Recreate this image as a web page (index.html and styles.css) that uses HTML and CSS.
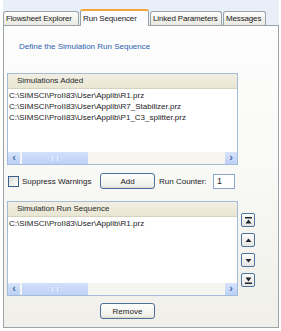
FILE: index.html
```html
<!DOCTYPE html>
<html lang="en">
<head>
  <meta charset="UTF-8">
  <title>Run Sequencer</title>
  <link rel="stylesheet" href="styles.css">
</head>
<body>
  <div class="window">
    <div class="tabstrip">
      <div class="tab">Flowsheet Explorer</div>
      <div class="tab active">Run Sequencer</div>
      <div class="tab">Linked Parameters</div>
      <div class="tab">Messages</div>
    </div>

    <div class="panel">
      <div class="title">Define the Simulation Run Sequence</div>

      <div class="listbox list-added">
        <div class="list-head">Simulations Added</div>
        <div class="list-body">
          <div class="item">C:\SIMSCI\ProII83\User\Applib\R1.prz</div>
          <div class="item">C:\SIMSCI\ProII83\User\Applib\R7_Stabilizer.prz</div>
          <div class="item">C:\SIMSCI\ProII83\User\Applib\P1_C3_splitter.prz</div>
        </div>
        <div class="hscroll">
          <span class="sb-btn">&lsaquo;</span>
          <span class="sb-thumb"><span class="grip"></span></span>
          <span class="sb-track"></span>
          <span class="sb-btn">&rsaquo;</span>
        </div>
      </div>

      <div class="controls">
        <label class="check"><span class="box"></span>Suppress Warnings</label>
        <button class="btn btn-add">Add</button>
        <span class="counter-label">Run Counter:</span>
        <span class="counter">1</span>
      </div>

      <div class="seq-row">
        <div class="listbox list-seq">
          <div class="list-head">Simulation Run Sequence</div>
          <div class="list-body">
            <div class="item">C:\SIMSCI\ProII83\User\Applib\R1.prz</div>
          </div>
          <div class="hscroll">
            <span class="sb-btn">&lsaquo;</span>
            <span class="sb-thumb"><span class="grip"></span></span>
            <span class="sb-track"></span>
            <span class="sb-btn">&rsaquo;</span>
          </div>
        </div>

        <div class="movers">
          <span class="mover">
            <svg width="7" height="7" viewBox="0 0 7 7"><rect x="0" y="0" width="7" height="1.5" fill="#1d2430"/><polygon points="0.5,6.5 3.5,2.5 6.5,6.5" fill="#1d2430"/></svg>
          </span>
          <span class="mover">
            <svg width="7" height="7" viewBox="0 0 7 7"><polygon points="0.5,5 3.5,1.5 6.5,5" fill="#1d2430"/></svg>
          </span>
          <span class="mover">
            <svg width="7" height="7" viewBox="0 0 7 7"><polygon points="0.5,2 3.5,5.5 6.5,2" fill="#1d2430"/></svg>
          </span>
          <span class="mover">
            <svg width="7" height="7" viewBox="0 0 7 7"><polygon points="0.5,0.5 3.5,4.5 6.5,0.5" fill="#1d2430"/><rect x="0" y="5.5" width="7" height="1.5" fill="#1d2430"/></svg>
          </span>
        </div>
      </div>

      <button class="btn btn-remove">Remove</button>
    </div>
  </div>
</body>
</html>
```

FILE: styles.css
```css
body {
  margin: 0;
  background-color: #fff;
  font-family: 'Liberation Sans', Arial, sans-serif;
  font-size: 8px;
  color: #1b1b1b;
}

.window {
  width: 276px;
  margin-left: 3px;
}

.tabstrip {
  display: flex;
  align-items: flex-end;
  height: 25px;
  background-color: #e9eff8;
}

.tab {
  height: 13px;
  line-height: 13px;
  padding: 0 2px;
  margin-right: 1px;
  border: 1px solid #9aa3a6;
  border-bottom: none;
  border-radius: 3px 3px 0 0;
  background: linear-gradient(#fdfdfb, #e9e8e1);
  white-space: nowrap;
  overflow: hidden;
  letter-spacing: -0.15px;
  color: #222;
}

.tab:first-child {
  width: 70px;
}

.tab.active {
  height: 15px;
  line-height: 16px;
  width: 63px;
  background: #fcfcfe;
  border-top: 2px solid #f2a43a;
  margin-bottom: -1px;
  position: relative;
}

.tab:nth-child(3) {
  width: 66px;
}

.tab:nth-child(4) {
  width: 37px;
}

.panel {
  height: 301px;
  border: 1px solid #9aa3a6;
  background: linear-gradient(#fdfdfd 0%, #f9f9f7 45%, #f0efe9 100%);
  padding: 0 0 0 3px;
  display: flex;
  flex-direction: column;
}

.title {
  margin-top: 16px;
  margin-left: 12px;
  line-height: 10px;
  color: #2a5fb0;
}

.listbox {
  width: 229px;
  border: 1px solid #a4bcd8;
  background-color: #fff;
  display: flex;
  flex-direction: column;
}

.list-added {
  height: 90px;
  margin-top: 21px;
}

.list-head {
  height: 14px;
  line-height: 14px;
  padding-left: 9px;
  background: linear-gradient(#f1efe3, #e9e6d3);
  border-bottom: 1px solid #d6d2bd;
  color: #2a2a2a;
}

.list-body {
  flex: 1;
  padding-top: 1px;
  padding-left: 1px;
}

.item {
  line-height: 11px;
  white-space: nowrap;
}

.hscroll {
  display: flex;
  height: 12px;
  background-color: #f6f5f0;
}

.sb-btn {
  width: 12px;
  height: 12px;
  line-height: 11px;
  text-align: center;
  background: linear-gradient(#d6e3fb, #bcd0f6);
  color: #4d6aa6;
  font-size: 11px;
  font-weight: bold;
}

.sb-thumb {
  width: 66px;
  margin-left: 2px;
  background: linear-gradient(#d2e0fb, #bed1f7);
  display: flex;
  align-items: center;
  justify-content: center;
}

.grip {
  width: 4px;
  height: 5px;
  border-left: 1px solid #e8effd;
  border-right: 1px solid #e8effd;
}

.sb-track {
  flex: 1;
}

.controls {
  display: flex;
  align-items: center;
  height: 16px;
  margin-top: 8px;
}

.check {
  display: flex;
  align-items: center;
  width: 92px;
  margin-left: 1px;
}

.box {
  width: 9px;
  height: 9px;
  border: 1px solid #3a5f8c;
  background: linear-gradient(135deg, #dcdcd5, #fff);
  margin-right: 3px;
}

.btn {
  font-family: 'Liberation Sans', Arial, sans-serif;
  font-size: 8px;
  color: #1b1b1b;
  width: 55px;
  height: 16px;
  padding: 0;
  border: 1px solid #4e6f99;
  border-radius: 3px;
  background: linear-gradient(#fefefe, #f0f0ea 85%, #d9d7cc);
}

.counter-label {
  margin-left: 4px;
  width: 54px;
}

.counter {
  width: 17px;
  height: 13px;
  line-height: 13px;
  padding-left: 3px;
  border: 1px solid #8aa6c8;
  background-color: #fff;
  font-size: 9px;
}

.seq-row {
  display: flex;
  margin-top: 12px;
}

.list-seq {
  height: 93px;
}

.movers {
  display: flex;
  flex-direction: column;
  gap: 6px;
  margin-top: 12px;
  margin-left: 3px;
}

.mover {
  width: 12px;
  height: 12px;
  border: 1px solid #4d72a2;
  border-radius: 2px;
  background: linear-gradient(#fdfdfd, #e6e5df);
  display: flex;
  align-items: center;
  justify-content: center;
}

.btn-remove {
  margin-top: 7px;
  margin-left: 93px;
}
```
